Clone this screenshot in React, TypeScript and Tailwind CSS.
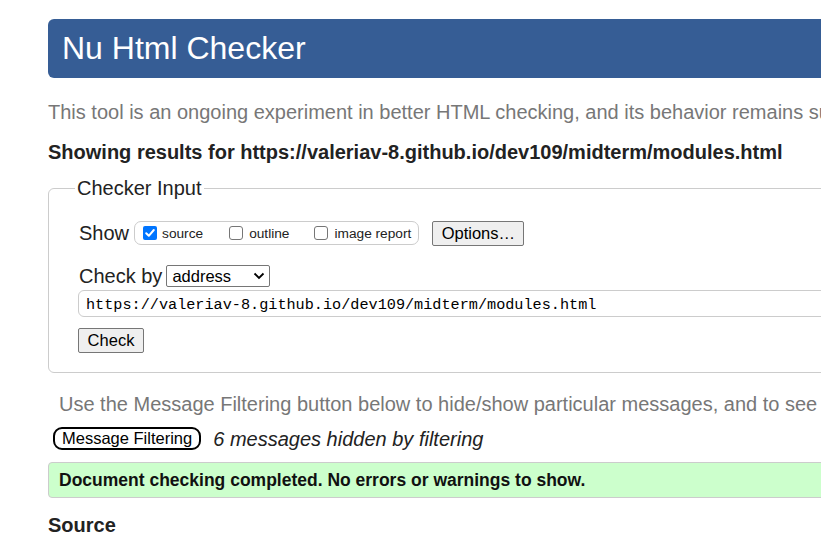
import React from "react";

function CheckBox({ checked }: { checked?: boolean }) {
  if (checked) {
    return (
      <span className="inline-flex items-center justify-center w-[14px] h-[14px] rounded-[2px] bg-[#0075ff] mr-[5px] relative top-[-1px] shrink-0">
        <svg width="12" height="12" viewBox="0 0 12 12">
          <path d="M2.2 6.2 L4.8 8.8 L9.8 3" fill="none" stroke="white" strokeWidth="2" strokeLinecap="round" strokeLinejoin="round" />
        </svg>
      </span>
    );
  }
  return <span className="inline-block w-[14px] h-[14px] rounded-[3px] border border-[#767676] bg-white mr-[6px] relative top-[-1px] shrink-0" />;
}

export default function App() {
  return (
    <div className="w-[821px] h-[557px] overflow-hidden bg-white" style={{ fontFamily: '"Liberation Sans", Arial, sans-serif' }}>
      <div className="w-[1100px] pl-[48px] pt-[19px]">
        <div className="h-[59px] bg-[#365d95] rounded-[6px] flex items-center pl-[14px] text-white text-[32px] pb-[1px]">
          Nu Html Checker
        </div>
        <p className="mt-[22px] text-[20px] leading-[24px] text-[#777] whitespace-nowrap">
          This tool is an ongoing experiment in better HTML checking, and its behavior remains subject to change
        </p>
        <p className="mt-[16px] text-[20px] leading-[24px] font-bold text-[#222] whitespace-nowrap">
          Showing results for https://valeriav-8.github.io/dev109/midterm/modules.html
        </p>
        <fieldset className="mt-[12px] border border-[#ccc] rounded-[6px] pl-[30px] pr-[10px] pb-[19px] pt-[6px]">
          <legend className="text-[20px] leading-[24px] text-[#222] px-[2px] ml-[-4px]">Checker Input</legend>
          <div className="flex items-center h-[26px] mt-[14px]">
            <span className="text-[20px] text-[#222] mr-[5px]">Show</span>
            <div className="flex items-center h-[24px] border border-[#ccc] rounded-[7px] pl-[8px] pr-[7px] pt-[2px] text-[13.7px] text-[#222]">
              <label className="flex items-center mr-[26px]"><CheckBox checked />source</label>
              <label className="flex items-center mr-[25px]"><CheckBox />outline</label>
              <label className="flex items-center"><CheckBox />image report</label>
            </div>
            <button className="ml-[13px] h-[25px] w-[92px] border border-[#767676] rounded-[2px] bg-[#efefef] text-[16.5px] text-black flex items-center justify-center">Options…</button>
          </div>
          <div className="flex items-center h-[26px] mt-[17px]">
            <span className="text-[20px] text-[#222] mr-[4px]">Check by</span>
            <div className="w-[104px] h-[22px] border border-[#767676] rounded-[2px] flex items-center justify-between pl-[5px] pr-[4px] text-[16.5px] text-black">
              <span>address</span>
              <svg width="12" height="8" viewBox="0 0 12 8"><path d="M1.5 1.5 L6 6 L10.5 1.5" fill="none" stroke="black" strokeWidth="1.8" /></svg>
            </div>
          </div>
          <div className="mt-[1px] ml-[-1px] h-[27px] border border-[#ccc] rounded-[6px] flex items-center pl-[7px] pt-[3px] text-[15.2px] text-black" style={{ fontFamily: '"Liberation Mono", monospace' }}>
            https://valeriav-8.github.io/dev109/midterm/modules.html
          </div>
          <button className="mt-[11px] ml-[-1px] h-[25px] w-[66px] border border-[#767676] rounded-[2px] bg-[#efefef] text-[16.5px] text-black flex items-center justify-center">Check</button>
        </fieldset>
        <p className="mt-[19px] ml-[11px] text-[20px] leading-[24px] text-[#777] whitespace-nowrap">
          Use the Message Filtering button below to hide/show particular messages, and to see total counts of errors and warnings.
        </p>
        <div className="flex items-center mt-[11px] ml-[5px] h-[23px]">
          <span className="h-[23px] px-[7px] border-2 border-black rounded-[9px] text-[16.5px] text-black flex items-center">Message Filtering</span>
          <span className="ml-[12px] text-[20px] italic text-[#222]">6 messages hidden by filtering</span>
        </div>
        <div className="mt-[12px] h-[36px] bg-[#ccffcc] border border-[#ccc] rounded-[4px] flex items-center pl-[10px] text-[17.5px] font-bold text-[#111]">
          Document checking completed. No errors or warnings to show.
        </div>
        <h2 className="mt-[15px] text-[20px] leading-[24px] font-bold text-[#222]">Source</h2>
      </div>
    </div>
  );
}
